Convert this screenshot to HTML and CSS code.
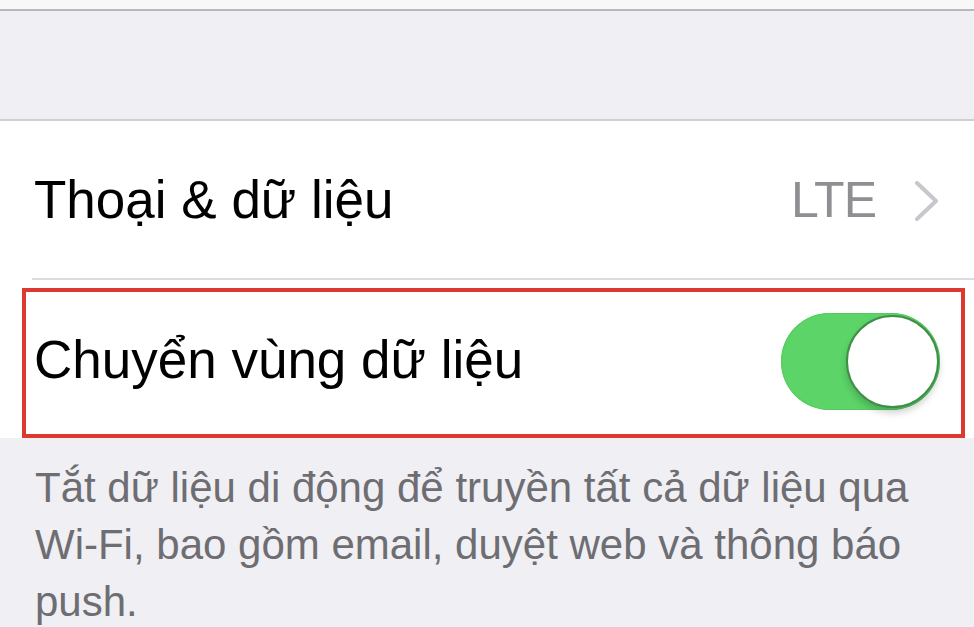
FILE: index.html
```html
<!DOCTYPE html>
<html lang="vi">
<head>
<meta charset="utf-8">
<title>Cài đặt di động</title>
<link rel="stylesheet" href="styles.css">
</head>
<body>
<div class="topbar"></div>
<div class="spacer"></div>
<section class="group">
  <div class="row row-first">
    <span class="label">Thoại &amp; dữ liệu</span>
    <span class="detail">
      <span class="value">LTE</span>
      <svg class="chevron" width="26" height="40" viewBox="0 0 26 40" aria-hidden="true">
        <polyline points="3,2 22,20 3,38" fill="none" stroke="#c7c7cc" stroke-width="4" stroke-linecap="round" stroke-linejoin="round"/>
      </svg>
    </span>
  </div>
  <div class="row-second">
    <div class="highlight">
      <span class="label label-up">Chuyển vùng dữ liệu</span>
      <span class="toggle"><span class="knob"></span></span>
    </div>
  </div>
</section>
<p class="footer">Tắt dữ liệu di động để truyền tất cả dữ liệu qua Wi-Fi, bao gồm email, duyệt web và thông báo push.</p>
</body>
</html>
```
FILE: styles.css
```css
html, body {
  margin: 0;
  padding: 0;
}
body {
  background: #efeff4;
  font-family: "Liberation Sans", Arial, sans-serif;
  overflow: hidden;
}
.topbar {
  height: 9px;
  background: #f8f8f8;
  border-bottom: 2px solid #b9b9bd;
}
.spacer {
  height: 108px;
}
.group {
  background: #ffffff;
  border-top: 2px solid #cfced3;
}
.row {
  height: 157px;
  display: flex;
  align-items: center;
  justify-content: space-between;
  padding: 0 34px 0 34px;
}
.label {
  font-size: 53px;
  color: #000000;
  white-space: nowrap;
}
.label-up {
  margin-bottom: 8px;
}
.detail {
  display: flex;
  align-items: center;
  gap: 38px;
}
.value {
  font-size: 50px;
  letter-spacing: -1px;
  color: #8e8e93;
}
.chevron {
  display: block;
  margin-top: 2px;
}
.row-second {
  margin-left: 32px;
  border-top: 2px solid #dcdce0;
}
.highlight {
  margin: 8px 9px 0 -10px;
  height: 142px;
  border: 4px solid #dc3a30;
  display: flex;
  align-items: center;
  justify-content: space-between;
  padding: 0 21px 0 8px;
}
.toggle {
  position: relative;
  width: 159px;
  height: 97px;
  border-radius: 49px;
  background: #5cd468;
  box-shadow: inset 0 0 0 1px #56c962;
  margin-top: -4px;
}
.knob {
  position: absolute;
  right: 1px;
  top: 2px;
  width: 89px;
  height: 89px;
  border-radius: 50%;
  background: #ffffff;
  border: 2px solid #3f8f48;
  box-shadow: 0 5px 7px rgba(0, 0, 0, 0.18);
}
.footer {
  margin: 0;
  padding: 21px 30px 0 35px;
  font-size: 42px;
  line-height: 57px;
  color: #6d6d72;
}
```
